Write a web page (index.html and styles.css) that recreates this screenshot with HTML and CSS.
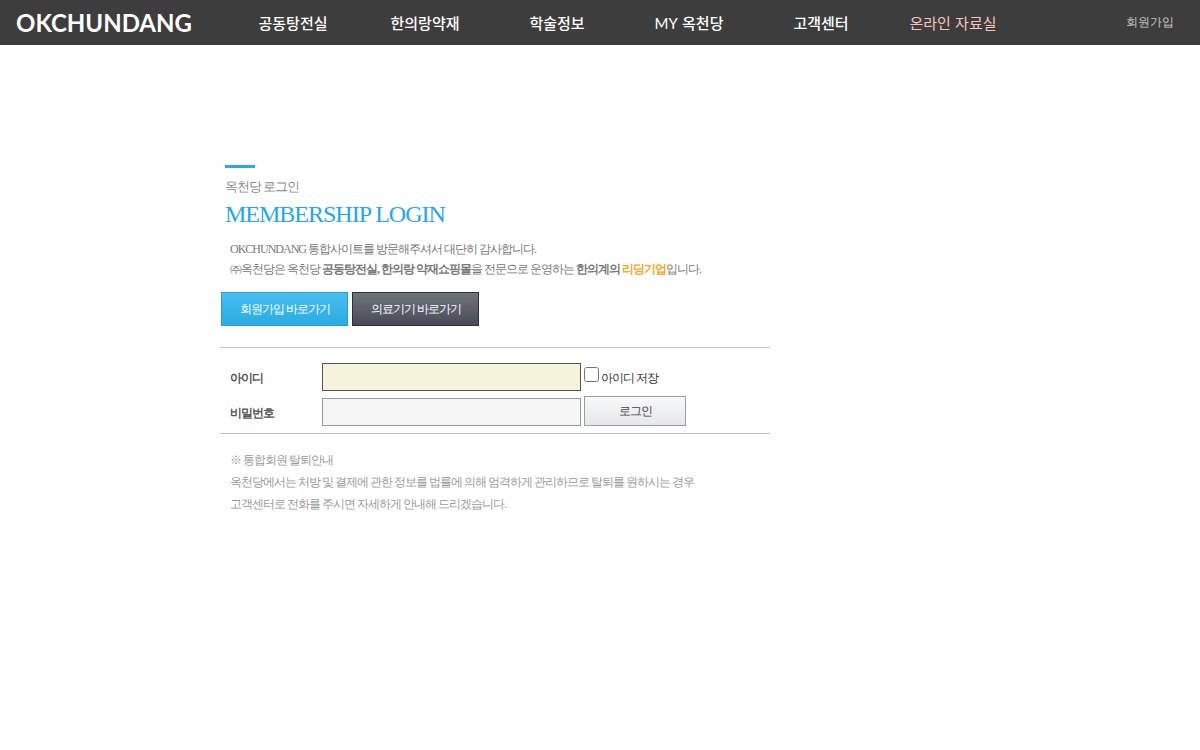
FILE: index.html
```html
<!DOCTYPE html>
<html lang="ko">
<head>
<meta charset="utf-8">
<title>OKCHUNDANG</title>
<link rel="stylesheet" href="styles.css">
</head>
<body>
<header class="topbar">
  <a class="logo" href="#">OKCHUNDANG</a>
  <nav class="menu">
    <a href="#">공동탕전실</a>
    <a href="#">한의랑약재</a>
    <a href="#">학술정보</a>
    <a href="#"><span class="latin">MY</span> 옥천당</a>
    <a href="#">고객센터</a>
    <a class="online" href="#">온라인 자료실</a>
  </nav>
  <a class="join" href="#">회원가입</a>
</header>
<main class="content">
  <div class="heading">
    <p class="subtitle">옥천당 로그인</p>
    <h1>MEMBERSHIP LOGIN</h1>
  </div>
  <p class="intro">OKCHUNDANG 통합사이트를 방문해주셔서 대단히 감사합니다.<br>
  ㈜옥천당은 옥천당 <b>공동탕전실, 한의랑 약재쇼핑몰</b>을 전문으로 운영하는 <b>한의계의 <span class="accent">리딩기업</span></b>입니다.</p>
  <div class="actions">
    <a class="button blue" href="#">회원가입 바로가기</a>
    <a class="button dark" href="#">의료기기 바로가기</a>
  </div>
  <form class="login">
    <label class="name" for="userid">아이디</label>
    <input class="field active" id="userid" type="text">
    <span class="save"><input id="saveid" type="checkbox"><label for="saveid">아이디 저장</label></span>
    <label class="name" for="password">비밀번호</label>
    <input class="field" id="password" type="password">
    <button class="submit" type="submit">로그인</button>
  </form>
  <p class="notice">※ 통합회원 탈퇴안내<br>
  옥천당에서는 처방 및 결제에 관한 정보를 법률에 의해 엄격하게 관리하므로 탈퇴를 원하시는 경우<br>
  고객센터로 전화를 주시면 자세하게 안내해 드리겠습니다.</p>
</main>
</body>
</html>
```

FILE: styles.css
```css
* {
  box-sizing: border-box;
}

body {
  margin: 0;
  background: #fff;
  color: #333;
  font-family: "Liberation Serif", serif;
  font-size: 12px;
}

p,
h1 {
  margin: 0;
}

a {
  color: inherit;
  text-decoration: none;
}

.topbar {
  display: flex;
  align-items: center;
  height: 45px;
  padding: 0 26px 0 16px;
  background: #3d3d3d;
  color: #fff;
}

.logo {
  width: 211px;
  font-family: Lato, sans-serif;
  font-size: 24px;
  font-weight: 700;
  line-height: 45px;
}

.menu {
  display: grid;
  grid-template-columns: repeat(6, 132px);
  font-family: "Noto Sans CJK KR", sans-serif;
  font-size: 15px;
  font-weight: 500;
  line-height: 43px;
  text-align: center;
}

.latin {
  font-family: Lato, sans-serif;
  font-weight: 400;
}

.online {
  color: #f5c6bd;
  font-weight: 400;
}

.join {
  margin-left: auto;
  color: #c8c8c8;
  line-height: 43px;
}

.content {
  max-width: 770px;
  padding: 120px 0 40px 220px;
  letter-spacing: -1px;
}

.heading {
  padding-left: 5px;
}

.heading::before {
  content: "";
  display: block;
  width: 30px;
  height: 3px;
  background: #2aaadc;
}

.subtitle {
  margin-top: 10px;
  color: #888;
  font-size: 13px;
  line-height: 18px;
}

h1 {
  margin-top: 4px;
  color: #22a7e8;
  font-size: 24px;
  font-weight: 400;
  line-height: 28px;
}

.intro {
  margin-top: 11px;
  padding-left: 10px;
  color: #777;
  line-height: 20px;
  white-space: nowrap;
}

.accent {
  color: #f9a51a;
}

.actions {
  display: flex;
  gap: 4px;
  margin-top: 13px;
  padding-left: 1px;
}

.button {
  width: 127px;
  height: 34px;
  border: 1px solid;
  color: #fff;
  line-height: 32px;
  text-align: center;
}

.blue {
  border-color: #20a0d4;
  background: linear-gradient(#47bdf0, #2bace2);
}

.dark {
  border-color: #2c2f3a;
  background: linear-gradient(#70747c, #484b57);
}

.login {
  display: grid;
  grid-template-columns: 92px 259px 102px;
  column-gap: 3px;
  row-gap: 5px;
  align-items: end;
  margin-top: 21px;
  padding: 15px 0 7px 7px;
  border: solid #c4c4c4;
  border-width: 1px 0;
}

.name {
  padding-left: 3px;
  color: #555;
  font-weight: 700;
  line-height: 26px;
}

.field {
  width: 100%;
  height: 28px;
  margin: 0;
  padding: 0 6px;
  border: 1px solid #999;
  border-radius: 0;
  outline: 0;
  background: #f5f5f5;
  font: inherit;
}

.active {
  border-color: #55554d;
  background: #f5f3dc;
}

.save {
  display: flex;
  align-items: center;
  gap: 2px;
  line-height: 26px;
}

.save input {
  width: 15px;
  height: 15px;
  margin: 0 0 8px;
}

.submit {
  height: 30px;
  border: 1px solid #999ca2;
  background: linear-gradient(#f8f8f9, #e6e7ea);
  color: #444;
  font: inherit;
  letter-spacing: inherit;
}

.notice {
  margin-top: 15px;
  padding-left: 10px;
  color: #999;
  line-height: 22px;
  white-space: nowrap;
}
```
